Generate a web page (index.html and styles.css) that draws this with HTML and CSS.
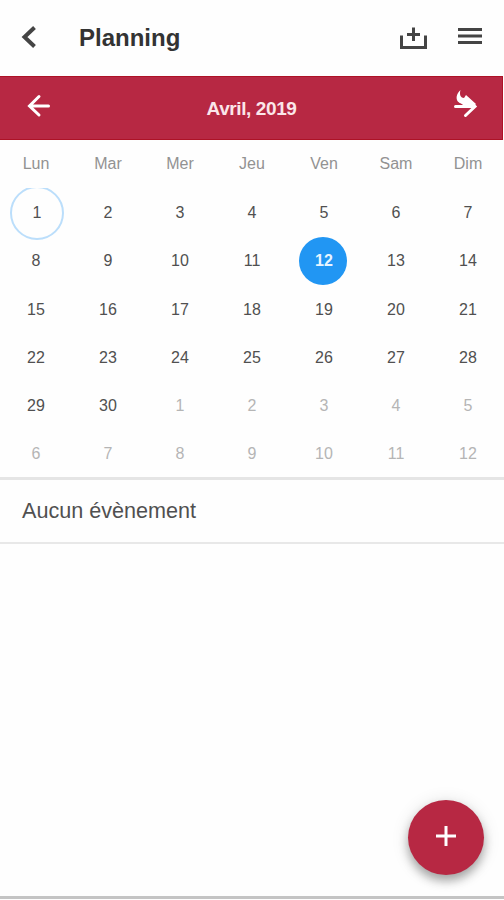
FILE: index.html
```
<!DOCTYPE html>
<html lang="fr">

<head>
    <meta charset="utf-8">
    <meta name="viewport" content="width=device-width, initial-scale=1">
    <title>Planning</title>
    <link rel="stylesheet" href="styles.css">
</head>

<body>

    <header class="header">
        <svg class="back" width="16" height="24" viewBox="0 0 16 24"><path d="M14.500 1.500L4.500 11l10 9.500"/></svg>
        <h1>Planning</h1>
        <svg class="add" width="28" height="24" viewBox="0 0 28 24"><path d="M1.500 9.500v12h24v-12M13.500 1.500v13.500M7 8.500h13"/></svg>
        <svg class="menu" width="24" height="24" viewBox="0 0 24 24"><path d="M0 3.500h24M0 10h24M0 16.500h24"/></svg>
    </header>

    <div class="month">
        <svg width="24" height="24" viewBox="0 0 24 24"><path d="M13 2.500L3.500 12l9.500 9M4 12h18.500"/></svg>
        <span>Avril, 2019</span>
        <svg width="24" height="30" viewBox="0 0 24 30">
            <path d="M2.500 15.500h18M12.500 24.500l9.500-9-8-8"/>
            <path class="swoosh" d="M7.500-1C4 2 3 6 4 9c1 3 4 3 6 5h12l1-1-10-9-2 3C8 7 6 4 7.500-1z"/>
        </svg>
    </div>

    <div class="week">
        <span>Lun</span><span>Mar</span><span>Mer</span><span>Jeu</span><span>Ven</span><span>Sam</span><span>Dim</span>
    </div>

    <div class="days">
        <span class="today">1</span><span>2</span><span>3</span><span>4</span><span>5</span><span>6</span><span>7</span>
        <span>8</span><span>9</span><span>10</span><span>11</span><span class="selected">12</span><span>13</span><span>14</span>
        <span>15</span><span>16</span><span>17</span><span>18</span><span>19</span><span>20</span><span>21</span>
        <span>22</span><span>23</span><span>24</span><span>25</span><span>26</span><span>27</span><span>28</span>
        <span>29</span><span>30</span><span class="next">1</span><span class="next">2</span><span class="next">3</span><span class="next">4</span><span class="next">5</span>
        <span class="next">6</span><span class="next">7</span><span class="next">8</span><span class="next">9</span><span class="next">10</span><span class="next">11</span><span class="next">12</span>
    </div>

    <div class="events">Aucun évènement</div>

    <button class="fab" aria-label="Ajouter">
        <svg width="20" height="20" viewBox="0 0 20 20"><path d="M10 0v20M0 10h20"/></svg>
    </button>

</body>

</html>
```

FILE: styles.css
```
* {
    box-sizing: border-box;
}

body {
    display: flex;
    flex-direction: column;
    height: 899px;
    margin: 0;
    overflow: hidden;
    background: #fefefe;
    border-bottom: 3px solid #c4c4c4;
    font-family: "Liberation Sans", Arial, sans-serif;
    color: #505050;
}

svg {
    fill: none;
    stroke: #444;
    stroke-width: 3;
}

.header {
    display: flex;
    align-items: center;
    height: 76px;
    padding: 0 22px 0 20px;
}

.header h1 {
    flex: 1;
    margin: 0 0 0 43px;
    font-size: 24px;
    line-height: 28px;
    color: #333;
}

.back {
    stroke-width: 4;
}

.add {
    margin-right: 30px;
}

.month {
    display: flex;
    align-items: center;
    justify-content: space-between;
    width: 503px;
    height: 64px;
    padding: 0 25px 5px 26px;
    background: #b72843;
    border: 1px solid #ad1226;
    border-left: 0;
    font-size: 19px;
    font-weight: bold;
    letter-spacing: -0.4px;
    color: #fbe6ea;
}

.month span {
    padding-top: 6px;
}

.month svg {
    overflow: visible;
    stroke: #fff;
    stroke-linecap: round;
}

.month .swoosh {
    fill: #fff;
    stroke: none;
}

.week,
.days {
    display: grid;
    grid-template-columns: repeat(7, 72px);
    text-align: center;
    font-size: 16px;
}

.week {
    height: 48px;
    line-height: 48px;
    color: #929292;
}

.days {
    grid-auto-rows: 48.3px;
    height: 292px;
    padding-top: 1px;
    line-height: 48px;
    overflow: hidden;
    border-bottom: 3px solid #e5e5e5;
}

.days .next {
    color: #b5b5b5;
}

.days .selected {
    width: 48px;
    height: 48px;
    margin-left: 11px;
    padding-left: 2px;
    border-radius: 50%;
    background: #2196f3;
    font-weight: bold;
    color: #e8f5ff;
}

/* ring is taller than the row, its top is cut by the grid */
.days .today {
    width: 54px;
    height: 54px;
    margin: -3px 0 0 10px;
    border: 2px solid #bbdefb;
    border-radius: 50%;
    line-height: 50px;
}

.events {
    height: 64px;
    padding-left: 22px;
    border-bottom: 2px solid #e8e8e8;
    font-size: 21.6px;
    line-height: 62px;
}

.fab {
    position: absolute;
    left: 408px;
    top: 800px;
    display: flex;
    align-items: center;
    justify-content: center;
    width: 76px;
    height: 75px;
    padding: 0 0 3px;
    border: 0;
    border-radius: 50%;
    background: #b72843;
    box-shadow: 0 6px 10px rgba(0, 0, 0, .3), 0 2px 18px rgba(0, 0, 0, .12);
}

.fab svg {
    stroke: #fff;
}
```
